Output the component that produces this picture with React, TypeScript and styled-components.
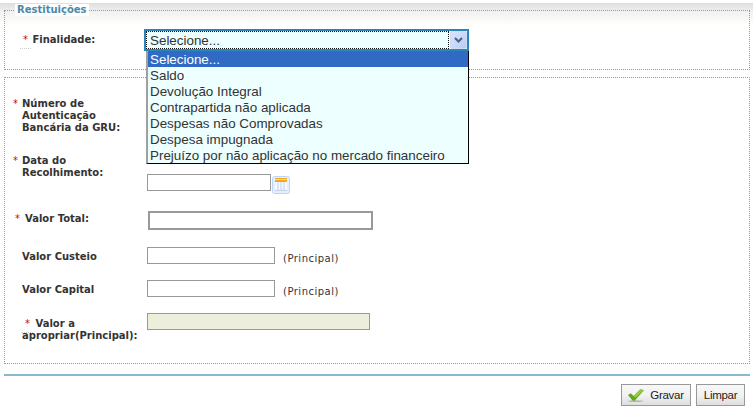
import { createGlobalStyle, styled } from 'styled-components';

const GlobalStyle = createGlobalStyle`
  html, body {
    margin: 0;
    padding: 0;
    background: #fff;
  }
`;

const options = [
  'Selecione...',
  'Saldo',
  'Devolução Integral',
  'Contrapartida não aplicada',
  'Despesas não Comprovadas',
  'Despesa impugnada',
  'Prejuízo por não aplicação no mercado financeiro',
];

const CalendarIcon = () => (
  <svg width="18" height="18" viewBox="0 0 18 18">
    <rect x="0.5" y="0.5" width="17" height="17" rx="2" fill="#e4efff" stroke="#bcd6f8" />
    <rect x="3" y="2" width="12" height="4" fill="#f5a623" />
    <rect x="3" y="3" width="12" height="1" fill="#ffdf94" />
    <rect x="3" y="6" width="12" height="8" fill="#f4f8ff" />
    <path d="M6 6v8M9 6v8M12 6v8" stroke="#c3d3ea" strokeWidth="1" />
    <path d="M3 14.5h12" stroke="#c3d3ea" />
  </svg>
);

const CheckIcon = () => (
  <svg width="17" height="15" viewBox="0 0 18 15">
    <ellipse cx="8" cy="13.5" rx="8" ry="1" fill="#b5b5b5" />
    <path d="M0 7l3-2 3 3 7-7 4 1-10 11H5z" fill="#62a81f" />
    <path d="M6 8l7-7 4 1-9 8z" fill="#93cc3f" />
  </svg>
);

const App = () => {
  return (
    <St.Page>
      <GlobalStyle />
      <St.Fieldset $height={64}>
        <St.Legend>Restituições</St.Legend>
        <St.Row $top={16}>
          <St.Label $indent={18} $width={139} $labelTop={2}>
            <St.Star $dotted>*</St.Star> <St.Wrapped $gap={1}>Finalidade:</St.Wrapped>
          </St.Label>
          <St.SelectWrap>
            <St.SelectBox>
              <St.SelectValue>Selecione...</St.SelectValue>
              <St.SelectArrow>
                <svg width="9" height="7" viewBox="0 0 9 7">
                  <path d="M1 1l3.5 3.5L8 1" fill="none" stroke="#4d6185" strokeWidth="2" />
                </svg>
              </St.SelectArrow>
            </St.SelectBox>
            <St.Menu>
              {options.map((option, index) => (
                <St.MenuItem key={option} $selected={index === 0}>
                  {option}
                </St.MenuItem>
              ))}
            </St.Menu>
          </St.SelectWrap>
        </St.Row>
      </St.Fieldset>

      <St.Fieldset $height={285} $top={7}>
        <St.Row $top={20}>
          <St.Label $indent={8}>
            <St.Star>*</St.Star>
            <St.Wrapped>
              Número de
              <br />
              Autenticação
              <br />
              Bancária da GRU:
            </St.Wrapped>
          </St.Label>
        </St.Row>
        <St.Row $top={21}>
          <St.Label $indent={8}>
            <St.Star>*</St.Star>
            <St.Wrapped>
              Data do
              <br />
              Recolhimento:
            </St.Wrapped>
          </St.Label>
          <St.Field $top={19}>
            <St.Input $width={124} />
            <St.CalendarButton>
              <CalendarIcon />
            </St.CalendarButton>
          </St.Field>
        </St.Row>
        <St.Row $top={17}>
          <St.Label $indent={10} $labelTop={2}>
            <St.Star>*</St.Star>
            <St.Wrapped $gap={5}>Valor Total:</St.Wrapped>
          </St.Label>
          <St.Field $left={1}>
            <St.Input $width={225} $height={19} $thick />
          </St.Field>
        </St.Row>
        <St.Row $top={17}>
          <St.Label $indent={17} $labelTop={4}>
            Valor Custeio
          </St.Label>
          <St.Field>
            <St.Input $width={128} />
            <St.Hint>(Principal)</St.Hint>
          </St.Field>
        </St.Row>
        <St.Row $top={15}>
          <St.Label $indent={17} $labelTop={4}>
            Valor Capital
          </St.Label>
          <St.Field>
            <St.Input $width={128} />
            <St.Hint>(Principal)</St.Hint>
          </St.Field>
        </St.Row>
        <St.Row $top={15}>
          <St.Label $indent={17} $labelTop={5}>
            <St.Star $dotted $inset={3}>*</St.Star> <St.Wrapped $gap={2}>Valor a</St.Wrapped>
            <br />
            apropriar(Principal):
          </St.Label>
          <St.Field>
            <St.Input $width={223} $disabled />
          </St.Field>
        </St.Row>
      </St.Fieldset>

      <St.Rule />

      <St.Actions>
        <St.Button $width={70}>
          <CheckIcon />
          <span>Gravar</span>
        </St.Button>
        <St.Button $width={49}>Limpar</St.Button>
      </St.Actions>
    </St.Page>
  );
};

export default App;

const St = {
  Page: styled.div`
    box-sizing: border-box;
    width: 753px;
    height: 415px;
    padding: 4px 3px 0 4px;
    overflow: hidden;
    background: linear-gradient(#fff 0, #fff 3px, #dedede 3px, #f2f2f2 12px, #fbfbf9 22px, #fff 24px) no-repeat;
    background-size: 100% 25px;
  `,
  Fieldset: styled.fieldset<{ $height: number; $top?: number }>`
    box-sizing: content-box;
    position: relative;
    height: ${(p) => p.$height}px;
    margin: ${(p) => p.$top ?? 0}px 0 0;
    padding: 0;
    border: 1px dotted #999;
    min-width: 0;
  `,
  Legend: styled.legend`
    margin-left: 10px;
    padding: 0 2px 0 2px;
    background: #fff;
    color: #4a89ab;
    font: bold 10px/12px 'DejaVu Sans', Verdana, sans-serif;
  `,
  Row: styled.div<{ $top: number }>`
    display: flex;
    align-items: flex-start;
    margin-top: ${(p) => p.$top}px;
  `,
  Label: styled.div<{ $indent: number; $width?: number; $labelTop?: number }>`
    flex: none;
    box-sizing: border-box;
    width: ${(p) => p.$width ?? 142}px;
    padding-left: ${(p) => p.$indent}px;
    padding-top: ${(p) => p.$labelTop ?? 0}px;
    color: #333;
    font: bold 10px/12px 'DejaVu Sans', Verdana, sans-serif;
  `,
  Wrapped: styled.span<{ $gap?: number }>`
    display: inline-block;
    vertical-align: top;
    margin-left: ${(p) => p.$gap ?? 4}px;
  `,
  Star: styled.span<{ $dotted?: boolean; $inset?: number }>`
    position: relative;
    display: inline-block;
    vertical-align: top;
    margin-left: ${(p) => p.$inset ?? 0}px;
    color: #e00000;
    font-weight: normal;

    &::after {
      content: '';
      display: ${(p) => (p.$dotted ? 'block' : 'none')};
      position: absolute;
      left: -3px;
      right: -3px;
      bottom: -3px;
      border-bottom: 1px dotted #ccc;
    }
  `,
  Field: styled.div<{ $top?: number; $left?: number }>`
    display: flex;
    align-items: flex-start;
    margin-top: ${(p) => p.$top ?? 0}px;
    margin-left: ${(p) => p.$left ?? 0}px;
  `,
  Input: styled.div<{ $width: number; $height?: number; $thick?: boolean; $disabled?: boolean }>`
    box-sizing: border-box;
    width: ${(p) => p.$width}px;
    height: ${(p) => p.$height ?? 17}px;
    background: ${(p) => (p.$disabled ? '#eeeedd' : '#fff')};
    border: ${(p) => (p.$thick ? 2 : 1)}px solid #999;
  `,
  CalendarButton: styled.div`
    margin: 2px 0 0 1px;
    line-height: 0;
  `,
  Hint: styled.span`
    margin: 6px 0 0 8px;
    color: #333;
    letter-spacing: 0.5px;
    font: 10px/12px 'DejaVu Sans', Verdana, sans-serif;
  `,
  SelectWrap: styled.div`
    position: relative;
    width: 325px;
    margin-top: -3px;
  `,
  SelectBox: styled.div`
    box-sizing: border-box;
    display: flex;
    height: 22px;
    border: 2px solid #2b86b9;
    background: #eeffff;
  `,
  SelectValue: styled.div`
    flex: 1;
    padding-left: 3px;
    border: 1px dotted #111;
    color: #333;
    font: 13.4px/18px 'Liberation Sans', Arial, sans-serif;
  `,
  SelectArrow: styled.div`
    display: flex;
    align-items: center;
    justify-content: center;
    box-sizing: border-box;
    width: 17px;
    margin-left: 1px;
    background: linear-gradient(135deg, #d9e5fb, #b8cdf6);
    border: 1px solid #d0dcf4;
    border-radius: 2px;
  `,
  Menu: styled.div`
    position: absolute;
    z-index: 2;
    top: 22px;
    left: 2px;
    right: 0;
    box-sizing: border-box;
    background: #eeffff;
    border-left: 2px solid #a0a0a0;
    border-right: 1px solid #000;
    border-bottom: 1px solid #000;
  `,
  MenuItem: styled.div<{ $selected: boolean }>`
    height: 16px;
    padding-left: 2px;
    background: ${(p) => (p.$selected ? '#316ac5' : 'transparent')};
    color: ${(p) => (p.$selected ? '#fff' : '#333')};
    white-space: nowrap;
    font: 13.4px/18px 'Liberation Sans', Arial, sans-serif;
  `,
  Rule: styled.div`
    height: 2px;
    margin-top: 10px;
    background: #8ab8cf;
  `,
  Actions: styled.div`
    display: flex;
    justify-content: flex-end;
    gap: 5px;
    margin-top: 8px;
    padding-right: 5px;
  `,
  Button: styled.div<{ $width: number }>`
    box-sizing: border-box;
    display: flex;
    align-items: center;
    justify-content: center;
    gap: 5px;
    width: ${(p) => p.$width}px;
    height: 22px;
    border: 1px solid #999;
    background: linear-gradient(#f8f8f8, #f2f2f2 50%, #dedede);
    color: #222;
    letter-spacing: -0.3px;
    font: 11.5px/16px 'Liberation Sans', Arial, sans-serif;
  `,
};
